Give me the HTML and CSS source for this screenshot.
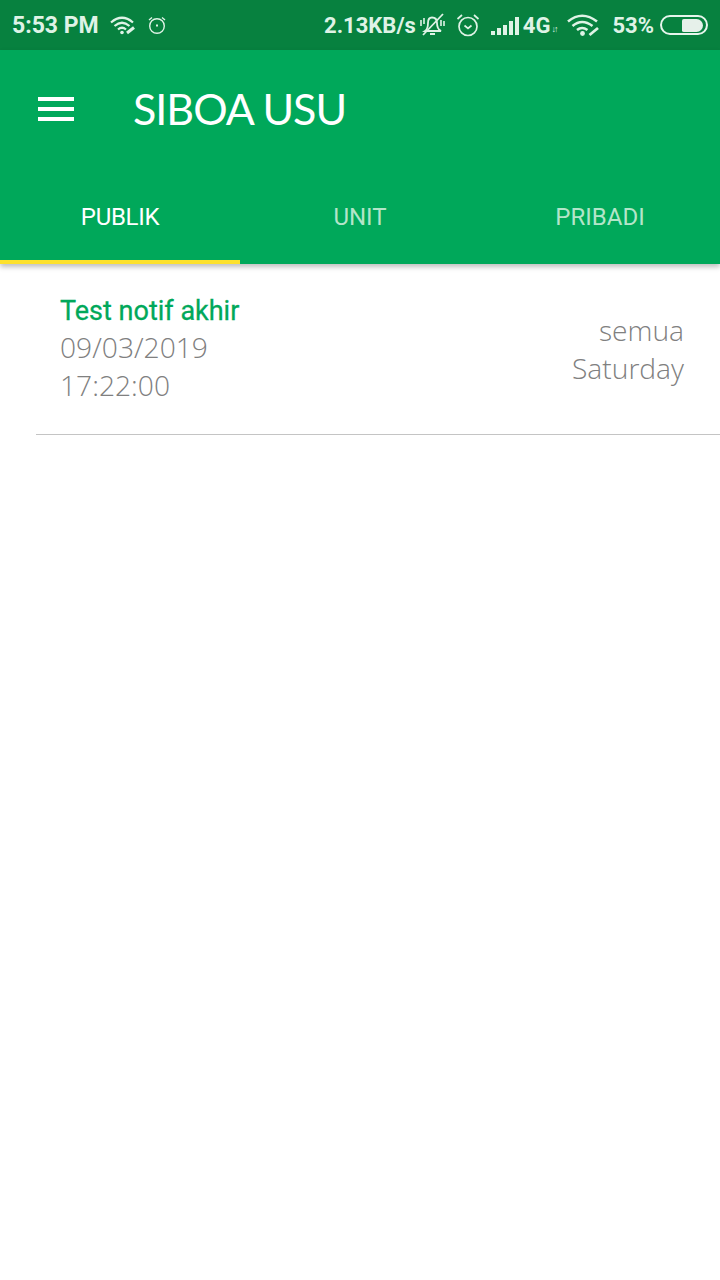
FILE: index.html
```html
<!DOCTYPE html>
<html lang="id">
<head>
  <meta charset="UTF-8">
  <title>SIBOA USU</title>
  <link rel="stylesheet" href="styles.css">
</head>
<body>

  <div class="status-bar">
    <div class="status-left">
      <span class="status-time">5:53 PM</span>
      <svg class="icon-wifi" width="26" height="20" viewBox="0 0 26 20" fill="none" stroke="#dff3e6" stroke-width="2.200">
        <path d="M1 7.500 Q12 -2 23 7.500"/>
        <path d="M4.500 11 Q12 4.500 19.500 11"/>
        <path d="M8 14.500 Q12 11 16 14.500"/>
        <circle cx="12" cy="17.500" r="1.800" fill="#dff3e6" stroke="none"/>
        <path d="M17 18 L24 12.500" stroke-width="3"/>
      </svg>
      <svg class="icon-clock" width="20" height="20" viewBox="0 0 20 20" fill="none" stroke="#dff3e6" stroke-width="1.400">
        <circle cx="10" cy="11" r="7.300"/>
        <path d="M2 5 L5 2.500 M18 5 L15 2.500"/>
        <path d="M10 9.500 V11.500" stroke-width="2"/>
      </svg>
    </div>
    <div class="status-right">
      <span class="status-speed">2.13KB/s</span>
      <svg class="icon-bell" width="26" height="26" viewBox="0 0 26 26" fill="none" stroke="#dff3e6" stroke-width="1.800">
        <path d="M6 19 Q9 17 9 11 Q9 5.500 13 5.500 Q18 5.500 18 11 Q18 17 22 19 Z"/>
        <path d="M11 22 H16" stroke-width="2"/>
        <path d="M4 23 L24 2"/>
        <path d="M2 8 V14 M5 6 V12 M22 8 V14 M25 9 V14" stroke-width="1.600"/>
      </svg>
      <svg class="icon-alarm" width="26" height="26" viewBox="0 0 26 26" fill="none" stroke="#dff3e6" stroke-width="1.700">
        <circle cx="13" cy="14.500" r="9"/>
        <path d="M2.500 7 L7 3 M23.500 7 L19 3"/>
        <path d="M9.500 13.500 L13 16.500 L16.500 13.500"/>
      </svg>
      <div class="signal">
        <i class="b1"></i><i class="b2"></i><i class="b3"></i><i class="b4"></i><i class="b5"></i>
      </div>
      <span class="status-net">4G</span>
      <span class="status-arrows">↓↑</span>
      <svg class="icon-wifi2" width="34" height="24" viewBox="0 0 34 24" fill="none" stroke="#dff3e6" stroke-width="2.600">
        <path d="M1 8.500 Q15 -3 30 8.500"/>
        <path d="M5.500 13 Q15 5 25.500 13"/>
        <path d="M10 17 Q15 13 20.500 17"/>
        <circle cx="15.500" cy="20.500" r="2.400" fill="#dff3e6" stroke="none"/>
        <path d="M22.500 22 L31 15" stroke-width="2.800"/>
      </svg>
      <span class="status-batt">53%</span>
      <div class="battery"><div class="battery-fill"></div></div>
    </div>
  </div>

  <div class="app-bar">
    <div class="toolbar">
      <div class="hamburger"><span></span><span></span><span></span></div>
      <h1 class="app-title">SIBOA USU</h1>
    </div>
    <div class="tabs">
      <div class="tab active">PUBLIK</div>
      <div class="tab">UNIT</div>
      <div class="tab">PRIBADI</div>
    </div>
  </div>

  <div class="notif-row">
    <div class="notif-left">
      <div class="notif-title">Test notif akhir</div>
      <div class="notif-line">09/03/2019</div>
      <div class="notif-line">17:22:00</div>
    </div>
    <div class="notif-right">
      <div class="notif-line">semua</div>
      <div class="notif-line">Saturday</div>
    </div>
  </div>

</body>
</html>
```

FILE: styles.css
```css
body { margin: 0; background-color: #fff; font-family: "Open Sans", sans-serif; height: 1280px; overflow: hidden; }

.status-bar { height: 50px; background-color: #07813f; color: #dff3e6; display: flex; justify-content: space-between; align-items: center; padding: 0 12px; font-family: Roboto, sans-serif; font-weight: 700; font-size: 22px; }
.status-left { display: flex; align-items: center; }
.status-time { font-size: 23px; margin-right: 11px; }
.icon-clock { margin-left: 11px; }
.status-right { display: flex; align-items: center; }
.status-speed { margin-right: 3px; }
.icon-alarm { margin-left: 10px; }
.signal { display: flex; align-items: flex-end; gap: 2px; height: 19px; margin-left: 10px; }
.signal i { display: block; width: 4px; background-color: #dff3e6; }
.signal .b1 { height: 4px; }
.signal .b2 { height: 7px; }
.signal .b3 { height: 10px; }
.signal .b4 { height: 14px; }
.signal .b5 { height: 18px; }
.status-net { margin-left: 4px; font-size: 22px; }
.status-arrows { font-size: 9px; width: 9px; margin-left: 1px; margin-top: 7px; white-space: nowrap; letter-spacing: -2px; }
.icon-wifi2 { margin-left: 7px; }
.status-batt { margin-left: 11px; }
.battery { width: 41px; height: 16px; border: 2px solid #e6f5ec; border-radius: 11px; margin-left: 6px; display: flex; justify-content: flex-end; align-items: center; padding-right: 3px; }
.battery-fill { width: 21px; height: 13px; background-color: #e6f0ea; border-radius: 2px 7px 7px 2px; }

.app-bar { background-color: #00a85a; height: 214px; box-shadow: 0 3px 5px rgba(0,0,0,0.25); display: flex; flex-direction: column; }
.toolbar { height: 118px; display: flex; align-items: center; padding-left: 38px; box-sizing: border-box; }
.hamburger { width: 36px; display: flex; flex-direction: column; gap: 6px; margin-right: 59px; }
.hamburger span { display: block; height: 4px; background-color: #fff; }
.app-title { margin: 0 0 2px; color: #fff; font-family: Lato, sans-serif; font-weight: 400; font-size: 43px; letter-spacing: -1px; }

.tabs { flex: 1; display: flex; }
.tab { flex: 1; display: flex; align-items: center; justify-content: center; color: #b3e5c9; font-family: Roboto, sans-serif; font-size: 24px; padding-top: 1px; }
.tab.active { color: #fff; letter-spacing: -0.3px; box-shadow: inset 0 -4px 0 #fde12d; }

.notif-row { margin-left: 36px; height: 171px; padding: 28px 36px 0 24px; box-sizing: border-box; border-bottom: 1px solid #c4c4c4; display: flex; justify-content: space-between; }
.notif-title { color: #00a85a; font-family: Roboto, sans-serif; font-weight: 400; font-size: 27px; line-height: 39px; -webkit-text-stroke: 0.300px #00a85a; margin-bottom: -3px; }
.notif-line { color: #808080; font-weight: 300; font-size: 28.200px; line-height: 38px; }
.notif-right { text-align: right; padding-top: 19px; }
```
